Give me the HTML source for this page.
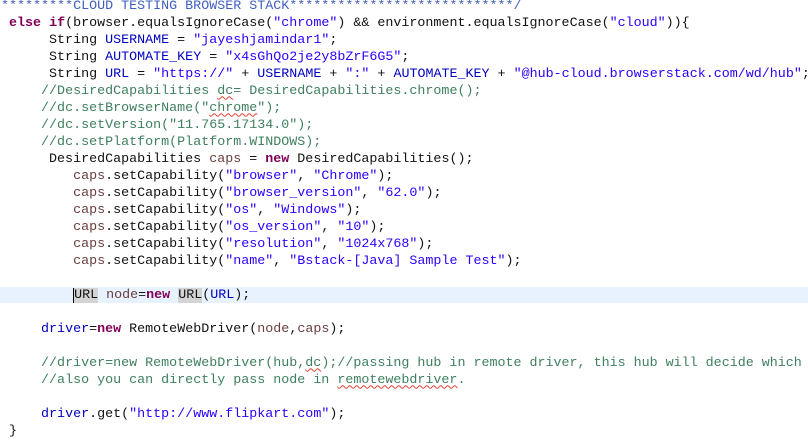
<!DOCTYPE html>
<html><head><meta charset="utf-8"><style>
html,body{margin:0;padding:0;background:#fff;width:808px;height:447px;overflow:hidden}
.hl{position:absolute;left:0;top:287px;width:808px;height:16px;background:#e8f2fe}
pre{position:absolute;left:1px;top:-2.5px;margin:0;font-family:"Liberation Mono","Courier New",monospace;font-size:13.35px;line-height:17px;color:#111;white-space:pre}
.k{color:#7f0055;font-weight:bold}
.s{color:#2a00ff}
.c{color:#3f7f5f}
.j{color:#3f5fbf}
.f{color:#0000c0}
.l{color:#6a3e3e}
.m{background:#d4d4d4}
.w{text-decoration:underline wavy #e04030;text-decoration-thickness:1px;text-underline-offset:2px}
.cur{border-left:1px solid #000}
</style></head><body>
<div class="hl"></div>
<pre><span class="j">*********CLOUD TESTING BROWSER STACK****************************/</span>
 <span class="k">else</span> <span class="k">if</span>(browser.equalsIgnoreCase(<span class="s">"chrome"</span>) &amp;&amp; environment.equalsIgnoreCase(<span class="s">"cloud"</span>)){
      String <span class="f">USERNAME</span> = <span class="s">"jayeshjamindar1"</span>;
      String <span class="f">AUTOMATE_KEY</span> = <span class="s">"x4sGhQo2je2y8bZrF6G5"</span>;
      String <span class="f">URL</span> = <span class="s">"https://"</span> + <span class="f">USERNAME</span> + <span class="s">":"</span> + <span class="f">AUTOMATE_KEY</span> + <span class="s">"@hub-cloud.browserstack.com/wd/hub"</span>;
     <span class="c">//DesiredCapabilities <span class="w">dc</span>= DesiredCapabilities.chrome();</span>
     <span class="c">//dc.setBrowserName("<span class="w">chrome</span>");</span>
     <span class="c">//dc.setVersion("11.765.17134.0");</span>
     <span class="c">//dc.setPlatform(Platform.WINDOWS);</span>
      DesiredCapabilities <span class="l">caps</span> = <span class="k">new</span> DesiredCapabilities();
         <span class="l">caps</span>.setCapability(<span class="s">"browser"</span>, <span class="s">"Chrome"</span>);
         <span class="l">caps</span>.setCapability(<span class="s">"browser_version"</span>, <span class="s">"62.0"</span>);
         <span class="l">caps</span>.setCapability(<span class="s">"os"</span>, <span class="s">"Windows"</span>);
         <span class="l">caps</span>.setCapability(<span class="s">"os_version"</span>, <span class="s">"10"</span>);
         <span class="l">caps</span>.setCapability(<span class="s">"resolution"</span>, <span class="s">"1024x768"</span>);
         <span class="l">caps</span>.setCapability(<span class="s">"name"</span>, <span class="s">"Bstack-[Java] Sample Test"</span>);

         <span class="m cur">URL</span> <span class="l">node</span>=<span class="k">new</span> <span class="m">URL</span>(<span class="f">URL</span>);

     <span class="f">driver</span>=<span class="k">new</span> RemoteWebDriver(<span class="l">node</span>,<span class="l">caps</span>);

     <span class="c">//driver=new RemoteWebDriver(hub,<span class="w">dc</span>);//passing hub in remote driver, this hub will decide which</span>
     <span class="c">//also you can directly pass node in <span class="w">remotewebdriver</span>.</span>

     <span class="f">driver</span>.get(<span class="s">"http://www.flipkart.com"</span>);
 }</pre>
</body></html>
